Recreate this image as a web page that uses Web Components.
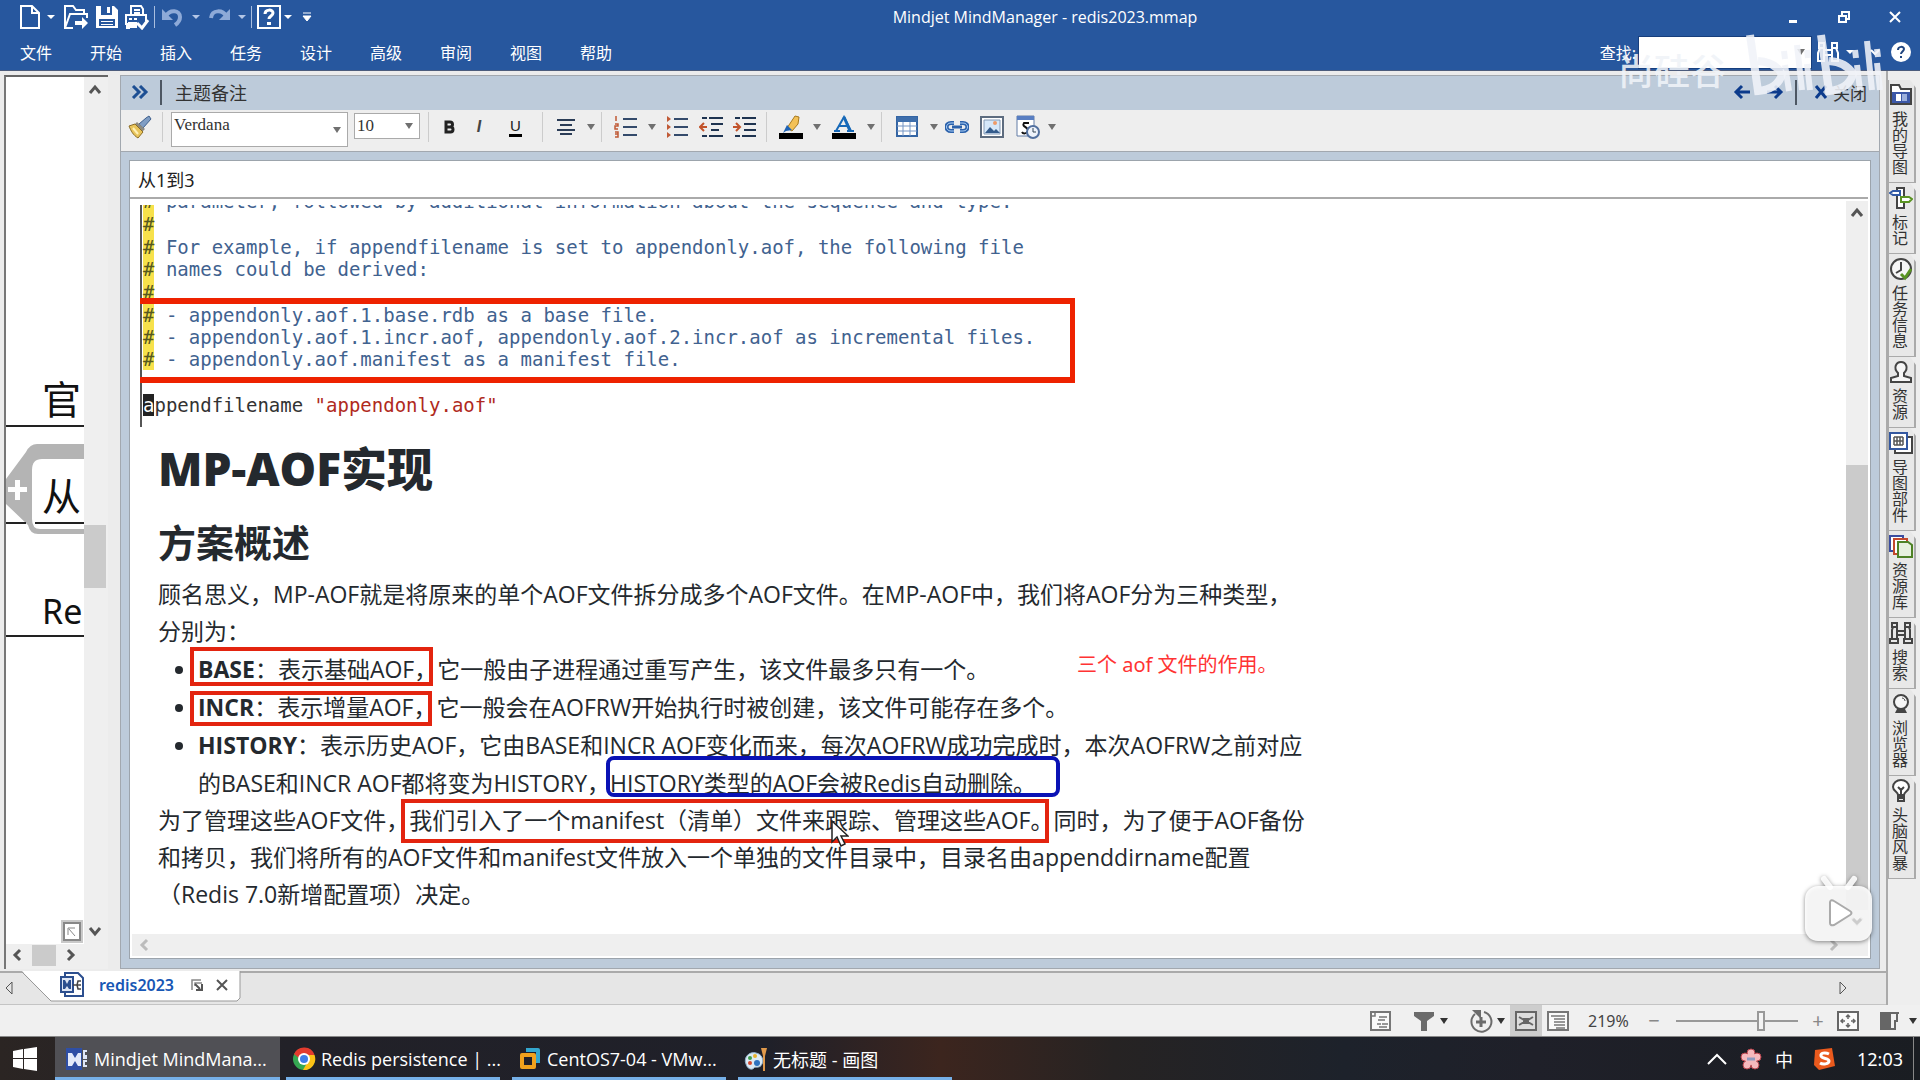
<!DOCTYPE html>
<html lang="zh-CN">
<head>
<meta charset="utf-8">
<title>Mindjet MindManager - redis2023.mmap</title>
<style>
html,body{margin:0;height:100%}
body{font-family:"Noto Sans","Noto Sans CJK SC",sans-serif;font-size:16px;color:#222;overflow:hidden;background:#e6e6e6}
</style>
</head>
<body>
<mind-app></mind-app>
<script>
const BASE_CSS = `*{box-sizing:border-box}button,input,select{font:inherit;color:inherit;margin:0;padding:0;border:0;background:none}button{display:inline-flex;align-items:center;justify-content:center}`;
function define(name, css, html){
  const t = document.createElement('template');
  t.innerHTML = '<style>' + BASE_CSS + css + '</style>' + html;
  customElements.define(name, class extends HTMLElement{
    constructor(){ super(); this.attachShadow({mode:'open'}).appendChild(t.content.cloneNode(true)); }
  });
}

/* name: [width, height, drawing] */
const ICONS = {
  file:[22,26,'<path d="M2 2h11l7 7v15H2z M13 2v7h7" fill="none" stroke="#fff" stroke-width="2"/>'],
  open:[26,26,'<path d="M10 24H2V2h8l3 4h8v4M2 24L7 10h17v4" fill="none" stroke="#fff" stroke-width="2"/><path d="M12 17h7v-4l6 6-6 6v-4h-7z" fill="#fff"/>'],
  save:[24,24,'<path d="M1 1h18l4 4v18H1z" fill="#fff"/><path d="M6 1h11v9H6z M4 14h16v7H4z" fill="#27579e"/><path d="M12 2h3v6h-3z M6 16h12v1H6z M6 19h12v1H6z" fill="#fff"/>'],
  print:[26,26,'<path d="M7 10V2h10l2 3v5M2 21V11h20v6M6 24H3v-5M10 6h6M10 9h6" fill="none" stroke="#fff" stroke-width="2"/><path d="M5 14h3v2H5z M10 14h3v2h-3z M4 18h9v6H4z" fill="#fff"/><path d="M13 19l5 5 6-8" fill="none" stroke="#fff" stroke-width="3"/>'],
  undo:[24,24,'<path d="M2 4v11h11z" fill="#8eaad8"/><path d="M6 11C10 4 20 5 20 12c0 4-2 6-5 8" fill="none" stroke="#8eaad8" stroke-width="4"/>'],
  redo:[24,24,'<path d="M22 4v11H11z" fill="#8eaad8"/><path d="M18 11C15 5 4 4 3 13" fill="none" stroke="#8eaad8" stroke-width="4"/>'],
  helpbox:[24,26,'<path d="M1 2h22v22H1z" fill="none" stroke="#fff" stroke-width="2"/><path d="M8 10c0-5 8-5 8-1 0 3-4 3-4 6" fill="none" stroke="#fff" stroke-width="3"/><path d="M10 18h4v3h-4z" fill="#fff"/>'],
  caretw:[10,6,'<path d="M1 1h8L5 5z" fill="#fff"/>'],
  caretdim:[10,6,'<path d="M1 1h8L5 5z" fill="#b3c6e6"/>'],
  caret:[10,6,'<path d="M1 0h8L5 6z" fill="#707070"/>'],
  caretk:[10,6,'<path d="M1 0h8L5 6z" fill="#333"/>'],
  custom:[10,12,'<path d="M1 2h8M1 5h8L5 10z" fill="#fff" stroke="#fff"/>'],
  min:[12,12,'<path d="M2 9h8v3H2z" fill="#fff"/>'],
  restore:[14,14,'<path d="M2 6h7v6H2zM5 5V2h7v7H9" fill="none" stroke="#fff" stroke-width="2"/>'],
  closew:[14,14,'<path d="M2 2l10 10M12 2L2 12" stroke="#fff" stroke-width="2"/>'],
  bino:[24,22,'<path d="M3 2h5v5H3zM16 2h5v5h-5zM2 20v-8l2-5h4v13zM22 20v-8l-2-5h-4v13zM8 9h8M8 14h8" fill="none" stroke="#fff" stroke-width="2"/>'],
  binok:[24,24,'<path d="M3 2h5v4H3zM16 2h5v4h-5zM3 18V9l1-3h4v12zM21 18V9l-1-3h-4v12zM1 18h8v4H1zM15 18h8v4h-8zM8 10h8M8 14h8" fill="none" stroke="#444" stroke-width="2"/>'],
  chevdw:[12,8,'<path d="M2 2l4 4 4-4" fill="none" stroke="#fff" stroke-width="2"/>'],
  help:[22,22,'<circle cx="11" cy="11" r="10" fill="#fff"/><path d="M8 9c0-4 6-4 6-1 0 2-3 3-3 5" fill="none" stroke="#20457f" stroke-width="2"/><path d="M10 15h2v2h-2z" fill="#20457f"/>'],
  dbl:[18,14,'<path d="M2 1l6 6-6 6M9 1l6 6-6 6" fill="none" stroke="#1d4f93" stroke-width="3"/>'],
  left:[18,16,'<path d="M17 8H3M9 2L3 8l6 6" fill="none" stroke="#0c3b8c" stroke-width="3"/>'],
  right:[18,16,'<path d="M1 8h14M9 2l6 6-6 6" fill="none" stroke="#0c3b8c" stroke-width="3"/>'],
  cross:[14,14,'<path d="M2 1l10 12M12 1L2 13" stroke="#0c3b8c" stroke-width="3"/>'],
  brush:[24,24,'<path d="M21 1l2 3-8 9-4-4 7-6z" fill="#7f9dc4" stroke="#3e5f8d"/><path d="M9 7l8 7-4 4-7-8z" fill="#8d8a80"/><path d="M7 9l8 8-5 6C5 20 3 16 1 11z" fill="#e9c55b" stroke="#8b6c25"/><path d="M5 13l5 6" stroke="#fff0b5" stroke-width="2"/>'],
  bold:[14,14,'<path d="M4 2v10h4.500a2.500 2.500 0 0 0 0-5H4h4a2.500 2.500 0 0 0 0-5z" fill="none" stroke="#222" stroke-width="3"/>'],
  align:[20,18,'<path d="M1 2h18M4 7h12M1 12h18M4 16h12" stroke="#2b3d57" stroke-width="2"/>'],
  num:[26,24,'<path d="M10 4h14M10 12h14M10 20h14" stroke="#344a6b" stroke-width="2"/><path d="M3 1v5M2 9h3v2H2v3h3M2 17h3v5H2M2 19h3" stroke="#c05a36" fill="none" stroke-width="1.500"/>'],
  bul:[24,24,'<path d="M9 4h14M9 12h14M9 20h14" stroke="#344a6b" stroke-width="2"/><path d="M2 1l4 3-4 3zM2 9l4 3-4 3zM2 17l4 3-4 3z" fill="#c05a36"/>'],
  outd:[26,22,'<path d="M3 2h5M10 2h14M12 8h12M12 14h8M3 20h5M10 20h14" stroke="#1e3350" stroke-width="2"/><path d="M8 11H2M5 7l-4 4 4 4" stroke="#c2532b" fill="none" stroke-width="2"/>'],
  ind:[26,22,'<path d="M3 2h5M10 2h14M12 8h12M12 14h12M3 20h5M10 20h14" stroke="#1e3350" stroke-width="2"/><path d="M1 11h6M4 7l4 4-4 4" stroke="#c2532b" fill="none" stroke-width="2"/>'],
  hili:[24,24,'<path d="M0 18h24v6H0z" fill="#000"/><path d="M16 1l4 1-1 7-6 7-5-3z" fill="#f3c157" stroke="#a7791e"/><path d="M8 10l5 5-6 1-3 2z" fill="#1e62b4"/>'],
  fontc:[24,24,'<path d="M0 18h24v6H0z" fill="#000"/><path d="M4 16L12 2l7 14M7 11h9M2 16h6M15 16h7" fill="none" stroke="#1769b8" stroke-width="2"/><path d="M12 2l6 14" stroke="#1769b8" stroke-width="3"/>'],
  table:[22,22,'<path d="M1 1h20v19H1z" fill="#fff" stroke="#3465a4" stroke-width="2"/><path d="M1 1h20v5H1z" fill="#3f6fac"/><path d="M1 10h20M1 15h20M7 6v14M14 6v14" stroke="#7495c4"/>'],
  link:[24,14,'<path d="M9 3H6C0 3 0 11 6 11h3M15 3h3c6 0 6 8 0 8h-3" fill="none" stroke="#2c62ab" stroke-width="4"/><path d="M9 3H6C0 3 0 11 6 11h3M15 3h3c6 0 6 8 0 8h-3" fill="none" stroke="#a9cdf5"/><path d="M7 7h10" stroke="#2c62ab" stroke-width="3"/>'],
  image:[24,22,'<path d="M1 1h22v20H1z" fill="#fff" stroke="#5d6c7f" stroke-width="2"/><path d="M4 4h16v14H4z" fill="#d5e8fa" stroke="#8499b4"/><path d="M5 17l5-6 4 4 2-2 4 4z" fill="#345c8c"/><circle cx="15" cy="7" r="2" fill="#ee9b69"/>'],
  date:[24,24,'<path d="M1 1h17v20H1z" fill="#fff" stroke="#637da6"/><path d="M1 1h17v4H1z" fill="#587ec2"/><path d="M13 8H8c-3 4 5 4 4 8-1 3-5 3-6 1" fill="none" stroke="#111" stroke-width="2"/><circle cx="17" cy="17" r="6" fill="#eef3fb" stroke="#52709f" stroke-width="2"/><path d="M17 13v4h3" stroke="#345" fill="none"/>'],
  chevu:[16,12,'<path d="M3 10l5-6 5 6" fill="none" stroke="#555" stroke-width="3"/>'],
  chevd:[16,12,'<path d="M3 2l5 6 5-6" fill="none" stroke="#555" stroke-width="3"/>'],
  chevl:[12,16,'<path d="M9 3L4 8l5 5" fill="none" stroke="#555" stroke-width="3"/>'],
  chevr:[12,16,'<path d="M3 3l5 5-5 5" fill="none" stroke="#555" stroke-width="3"/>'],
  chevlg:[12,16,'<path d="M9 3L4 8l5 5" fill="none" stroke="#bcbcbc" stroke-width="3"/>'],
  chevrg:[12,16,'<path d="M3 3l5 5-5 5" fill="none" stroke="#bcbcbc" stroke-width="3"/>'],
  corner:[22,23,'<path d="M0 0h22v23H0z" fill="#c9c9c9"/><path d="M3 3h16v17H3z" fill="#fff" stroke="#888" stroke-width="2"/><path d="M7 15V8h7M8 9l6 7" fill="none" stroke="#888"/>'],
  tril:[10,16,'<path d="M8 2v12L2 8z" fill="none" stroke="#555"/>'],
  trir:[10,16,'<path d="M2 2v12l6-6z" fill="none" stroke="#555"/>'],
  doc:[26,26,'<path d="M5 1h13l5 5v18H5z" fill="#fff" stroke="#2c4f8f" stroke-width="2"/><path d="M1 5h12v15H1z" fill="#dfe7f5" stroke="#2c4f8f" stroke-width="2"/><path d="M3 8h2l2 4 2-4h2v9H9l-2-3-2 3H3z" fill="#2c4f8f"/><path d="M13 13h4M21 9h-3l-1 4 1 4h3M17 13h4" fill="none" stroke="#444" stroke-width="1.500"/>'],
  pop:[14,14,'<path d="M2 12V2h9M5 8V5h7" fill="none" stroke="#888" stroke-width="1.500"/><path d="M5 6l5 5M12 6v6H6" fill="none" stroke="#555" stroke-width="2"/>'],
  closek:[14,14,'<path d="M2 2l10 10M12 2L2 12" stroke="#555" stroke-width="2"/>'],
  folder:[24,24,'<path d="M2 21V2h8l2 4h10v15z" fill="#fff" stroke="#444" stroke-width="2"/><path d="M3 9h18v11H3z" fill="#3b57a7"/><path d="M7 11h5v7H7z" fill="#fff"/><path d="M13 11h5v7h-5z" fill="#9db0dc"/>'],
  mark:[24,24,'<path d="M8 2h7v20H8z" fill="#fff" stroke="#444" stroke-width="2"/><path d="M11 5v4H4L1 7l3-2z" fill="#fff" stroke="#3059a6" stroke-width="2"/><path d="M12 11h8l3 2-3 3h-8z" fill="#fff" stroke="#5a9423" stroke-width="2"/>'],
  clock:[24,24,'<circle cx="12" cy="12" r="10" fill="#f6f6f6" stroke="#444" stroke-width="2"/><path d="M12 5v8l-5 3" fill="none" stroke="#444" stroke-width="2"/><path d="M12 17l4 4 6-9" fill="none" stroke="#5a9423" stroke-width="3"/>'],
  person:[24,24,'<path d="M9 13C4 8 7 2 12 2s8 6 3 11v3l7 2v4H2v-4l7-2z" fill="#f6f6f6" stroke="#444" stroke-width="2"/>'],
  parts:[24,24,'<path d="M6 6h17v16H6z" fill="#fff" stroke="#444" stroke-width="2"/><path d="M1 2h17v16H1z" fill="#fff" stroke="#3458a0" stroke-width="2"/><path d="M5 6h9M5 10h9M5 14h9M5 6v8M8 6v8M11 6v8M14 6v8" stroke="#555" stroke-width="1.500"/>'],
  lib:[24,24,'<path d="M1 2h13v15H1z" fill="#fff" stroke="#3b4da0" stroke-width="2"/><path d="M5 5h13v15H5z" fill="#fff" stroke="#c3492d" stroke-width="2"/><path d="M9 8h10l4 3v12H9z" fill="#e7f1df" stroke="#4e8226" stroke-width="2"/>'],
  ball:[24,24,'<circle cx="12" cy="10" r="7" fill="#f6f6f6" stroke="#444" stroke-width="2"/><path d="M13 6c2 0 3 2 3 3" fill="none" stroke="#444"/><path d="M8 17h8l2 4H6z" fill="#444"/>'],
  bulb:[24,24,'<path d="M9 16C9 13 4 12 4 8a8 7 0 0 1 16 0c0 4-5 5-5 8z" fill="#fff" stroke="#444" stroke-width="2"/><path d="M9 8l3 3 3-3M12 11v5M9 17h6v5H9zM9 19h6" fill="none" stroke="#444" stroke-width="2"/>'],
  note:[22,22,'<path d="M1 2h19v18H1z" fill="#fafafa" stroke="#777" stroke-width="2"/><path d="M1 6h4V2M9 7h8M8 10h7M7 14h4M12 14h6M9 17h8" stroke="#777" stroke-width="1.500" fill="none"/>'],
  funnel:[22,22,'<path d="M1 2h20v4l-7 5v10H8V11L1 6z" fill="#6b6b6b"/>'],
  addc:[24,24,'<path d="M15 3a10 10 0 1 1-9 2" fill="none" stroke="#6b6b6b" stroke-width="2"/><path d="M3 1h9v9z" fill="#6b6b6b"/><path d="M12 8v10M7 13h10" stroke="#6b6b6b" stroke-width="3" fill="none"/>'],
  mapv:[22,20,'<path d="M1 1h20v18H1z" fill="#ddd" stroke="#666" stroke-width="2"/><path d="M9 8h4v4H9zM4 6l5 3M4 14l5-3M18 6l-5 3M18 14l-5-3" stroke="#666" stroke-width="2" fill="#666"/>'],
  outline:[22,20,'<path d="M1 1h20v18H1z" fill="#fafafa" stroke="#777" stroke-width="2"/><path d="M4 5h14M7 8h11M7 11h11M7 14h11M9 17h9" stroke="#777" stroke-width="1.500"/>'],
  fit:[22,20,'<path d="M1 1h20v18H1z" fill="#fafafa" stroke="#666" stroke-width="2"/><path d="M11 4v4M11 12v4M4 10h4M14 10h4M9 6l2-2 2 2M9 14l2 2 2-2M6 8l-2 2 2 2M16 8l2 2-2 2" stroke="#666" stroke-width="1.500" fill="none"/>'],
  pane:[22,20,'<path d="M1 1h11v18H1z" fill="#666"/><path d="M12 2h8M18 2v8h-2v8h-4" fill="none" stroke="#666" stroke-width="2"/>'],
  win:[24,24,'<path d="M0 4l10-2v9H0zM11 2l13-2v11H11zM0 12h10v10L0 20zM11 12h13v12l-13-2z" fill="#fff"/>'],
  mind:[24,24,'<path d="M1 1h16v22H1z" fill="#2f4fa5"/><path d="M3 6h4l3 5 3-5h3v13h-3l-3-5-3 5H3z" fill="#e3eafa"/><path d="M22 4h-3v5h3M22 11h-4M22 14h-3v5h3" fill="none" stroke="#dfe7f8" stroke-width="2"/>'],
  chrome:[24,24,'<circle cx="12" cy="12" r="11" fill="#35a852"/><path d="M12 12h-4L2 7a11 11 0 0 1 20.500 1H12z" fill="#e33b2e"/><path d="M12 8h10.500A11 11 0 0 1 11 23l5-9z" fill="#fbc116"/><circle cx="12" cy="12" r="6" fill="#fff"/><circle cx="12" cy="12" r="4" fill="#3f7de8"/>'],
  vm:[24,24,'<path d="M8 3h12v13" fill="none" stroke="#34a7cf" stroke-width="4" stroke-linejoin="round"/><path d="M4 8h12v12H4z" fill="none" stroke="#f0a21d" stroke-width="4" stroke-linejoin="round"/>'],
  paint:[24,26,'<path d="M2 18C-1 11 6 5 12 7c6 1 8 7 6 11-2 5-7 2-8 4-3 3-7 0-8-4z" fill="#dceaf5" stroke="#8fb0cb"/><circle cx="6" cy="12" r="2" fill="#3f9c4c"/><circle cx="11" cy="10" r="2" fill="#e8b12d"/><circle cx="6" cy="17" r="2" fill="#d4472f"/><circle cx="13" cy="17" r="3" fill="#2e72bf"/><path d="M19 25V10l-2-8h6l-2 8v15z" fill="#e19a4b"/>'],
  up:[22,14,'<path d="M2 12l9-9 9 9" fill="none" stroke="#fff" stroke-width="2"/>'],
  flower:[24,24,'<g fill="#f5b9bd" stroke="#b8434c"><circle cx="12" cy="6" r="4"/><circle cx="18" cy="10" r="4"/><circle cx="16" cy="18" r="4"/><circle cx="8" cy="18" r="4"/><circle cx="6" cy="10" r="4"/></g><circle cx="12" cy="12" r="6" fill="#f5b9bd"/><path d="M8 12h8" stroke="#8d9bc0" stroke-width="3"/>'],
  sogou:[24,24,'<path d="M3 3l17-2 3 18-16 4-5-5z" fill="#ea5a1d"/><path d="M17 7c-4-2-9-1-8 2s8 2 8 5-6 4-9 2" fill="none" stroke="#fff" stroke-width="3"/>']
};
customElements.define('ui-icon', class extends HTMLElement{
  constructor(){ super(); this.attachShadow({mode:'open'}); }
  connectedCallback(){
    const [w,h,d] = ICONS[this.getAttribute('name')];
    this.shadowRoot.innerHTML = '<style>:host{display:inline-flex;flex:none}svg{display:block}</style><svg width="'+w+'" height="'+h+'" viewBox="0 0 '+w+' '+h+'" aria-hidden="true">'+d+'</svg>';
  }
});
const ic = n => '<ui-icon name="'+n+'"></ui-icon>';
const btn = (n,w,label) => '<button type="button" aria-label="'+(label||n)+'" style="width:'+w+'px">'+ic(n)+'</button>';
const sep = '<i class="sep"></i>';

define('title-bar', `
:host{display:flex;height:34px;align-items:center;color:#fff;padding-left:18px}
.quick{display:flex;align-items:center;height:30px}
.sep{width:1px;height:22px;background:#a9bedf;margin:0 2px}
h1{margin:0 auto;font-family:"Open Sans","Noto Sans",sans-serif;font-size:16px;font-weight:400;line-height:24px;white-space:nowrap}
.win{display:flex}
.win button{height:30px}
`, `<div class="quick">${btn('file',24,'新建')}${btn('caretw',18)}${btn('open',32,'打开')}${btn('save',30,'保存')}${btn('print',30,'打印')}${sep}${btn('undo',30,'撤消')}${btn('caretdim',18)}${btn('redo',30,'恢复')}${btn('caretdim',14)}${sep}${btn('helpbox',30,'帮助')}${btn('caretw',8)}${btn('custom',30)}</div>
<h1>Mindjet MindManager - redis2023.mmap</h1>
<div class="win">${btn('min',50,'最小化')}${btn('restore',52,'还原')}${btn('closew',50,'关闭')}</div>`);

define('menu-item', `:host{display:block;width:70px}button{width:70px;height:32px;font-size:16px;justify-content:flex-start;color:#fff}`, `<button type="button"><slot></slot></button>`);

define('menu-bar', `
:host{display:flex;height:36px;align-items:center;padding:0 12px 0 20px;color:#fff}
nav{display:flex;flex:1}
label{font-size:16px;margin-right:2px}
.find{display:flex;align-items:center;background:#fff;border:1px solid #173e7c;width:174px;height:33px}
.find input{flex:1;min-width:0;height:100%;outline:0;color:#222}
`, `<nav>${['文件','开始','插入','任务','设计','高级','审阅','视图','帮助'].map(t=>'<menu-item>'+t+'</menu-item>').join('')}</nav>
<label for="q">查找:</label><div class="find"><input id="q" type="text">${btn('caret',20)}</div>${btn('bino',32,'查找')}${btn('caretw',12)}${btn('chevdw',38)}${btn('help',14,'帮助')}`);

define('map-canvas', `
:host{display:flex;width:104px;margin:4px 0 2px 4px;border-left:2px solid #777;border-top:2px solid #666;background:#efefef}
.col{width:78px;display:flex;flex-direction:column}
.map{position:relative;flex:1;background:#fff;overflow:hidden}
.map svg{position:absolute;left:0;top:0}
.map span{position:absolute;left:36px;line-height:48px;color:#111}
.z{font-size:39px}.r{font-size:34px}
.corner{position:absolute;right:1px;bottom:1px}
.h{display:flex;height:22px;align-items:center;margin-bottom:3px}
.h i{width:24px;height:21px;background:#cbcbcb;margin:0 9px}
.v{width:22px;display:flex;flex-direction:column;align-items:center;padding:6px 0 31px}
.v i{width:22px;height:63px;background:#cbcbcb;margin-top:430px}
.v ui-icon:last-child{margin-top:auto}
.h ui-icon:first-child{margin-left:5px}
`, `<div class="col"><div class="map">
<svg width="78" height="846" viewBox="0 0 78 846"><path d="M78 367H31Q24 367 20 375L0 402V427L22 448Q24 457 32 457H78V452H34Q26 452 26 442V393Q26 382 36 382H78z" fill="#b4b4b4"/><path d="M0 349h78M0 446h20M29 446h49M0 559h78" stroke="#222" stroke-width="2"/><path d="M9 403h5v7h7v5h-7v8H9v-8H2v-5h7z" fill="#fff"/></svg>
<span class="z" style="top:298px">官</span><span class="z" style="top:395px">从</span><span class="r" style="top:510px">Re</span>
<ui-icon class="corner" name="corner"></ui-icon></div>
<div class="h">${ic('chevl')}<i></i>${ic('chevr')}</div></div>
<div class="v">${ic('chevu')}<i></i>${ic('chevd')}</div>`);

define('format-toolbar', `
:host{display:flex;height:42px;background:#eee;border-bottom:1px solid #a2a8af;padding:1px 0 0}
.row{display:flex;align-items:center;height:32px}
.sep{width:1px;height:30px;background:#ccc;margin:0 4px}
.row button{height:30px}
.sel{position:relative;display:flex;background:#fff;border:1px solid #aaa;margin-left:4px;align-items:center;align-self:flex-start}
.sel select{appearance:none;width:100%;font-family:"Liberation Serif",serif;font-size:17px;line-height:20px;padding-left:2px;outline:0;color:#333}
.sel ui-icon{position:absolute;right:5px;pointer-events:none}
.f{width:177px;height:35px;padding-bottom:9px;margin-top:1px}.f ui-icon{top:14px}
.s{width:66px;height:26px;margin:2px 4px 0 6px}
.i{font:italic 700 16px "Liberation Sans",sans-serif;color:#444}.u{font:700 15px "Liberation Sans",sans-serif}.u b{font-weight:400;border-bottom:3px solid #000;line-height:16px;padding:0 1px}
`, `<div class="row">${btn('brush',37,'格式刷')}${sep}
<div class="sel f"><select aria-label="字体"><option>Verdana</option></select>${ic('caret')}</div>
<div class="sel s"><select aria-label="字号"><option>10</option></select>${ic('caret')}</div>
${sep}${btn('bold',32,'加粗')}<button type="button" class="i" style="width:28px">I</button><button type="button" class="u" style="width:45px"><b>U</b></button>${sep}${btn('align',38,'对齐')}${btn('caret',12)}${sep}${btn('num',40)}${btn('caret',12)}${btn('bul',38)}${btn('outd',32)}${btn('ind',34)}${sep}${btn('hili',40)}${btn('caret',12)}${btn('fontc',42)}${btn('caret',12)}${sep}${btn('table',42)}${btn('caret',12)}${btn('link',34)}${btn('image',36)}${btn('date',36)}${btn('caret',12)}</div>`);

define('marked-text', `
:host{display:inline-block;position:relative}
:host::after{content:"";position:absolute;inset:var(--inset,0 4px 1px -8px);border:4px solid #e3240f;pointer-events:none}
:host([kind=blue])::after{border-color:#0a12b5;border-radius:8px}
`, `<slot></slot>`);

define('code-shot', `
:host{display:block;margin:-15px 0 0 10px;border-left:2px solid #555;height:237px;position:relative;font-family:"DejaVu Sans Mono",monospace;font-size:19px;color:#41628f;white-space:pre}
div{line-height:22px;height:22px;padding-left:1px}
.e{height:24px;line-height:24px}
i{font-style:normal;background:#f7e14b;color:#555820;display:inline-block;height:100%}
.cmd{color:#333}.cmd b{font-weight:400;background:#222;color:#fff}.cmd em{font-style:normal;color:#b02a20}
.box{position:absolute;left:-2px;top:108px;width:935px;height:85px;padding:0;border:solid #ee2200;border-width:6px 5px 6px 0}
`, `<div><i>#</i> parameter, followed by additional information about the sequence and type.</div><div class="e"><i>#</i></div><div><i>#</i> For example, if appendfilename is set to appendonly.aof, the following file</div><div><i>#</i> names could be derived:</div><div class="e"><i>#</i></div><div><i>#</i> - appendonly.aof.1.base.rdb as a base file.</div><div><i>#</i> - appendonly.aof.1.incr.aof, appendonly.aof.2.incr.aof as incremental files.</div><div><i>#</i> - appendonly.aof.manifest as a manifest file.</div><div class="e"></div><div class="cmd"><b>a</b>ppendfilename <em>"appendonly.aof"</em></div><div class="box"></div>`);

define('notes-article', `
:host{display:block;position:relative;flex:1;min-width:0;overflow:hidden;margin-top:6px;white-space:nowrap;color:#24292e}
article{padding-left:28px;font-family:"Open Sans","Noto Sans CJK SC",sans-serif;font-size:23px}
h2,h3,p,ul{margin:0}
h2{font-size:46px;line-height:60px;margin-top:11px;font-weight:800}
h3{font-size:38px;line-height:56px;margin:16px 0 6px;font-weight:700}
p{line-height:37px}
ul{padding-left:40px}li{line-height:38px}li::marker{font-size:22px}
aside{position:absolute;left:947px;top:448px;font-size:20px;line-height:24px;color:#f33}
.cur{position:absolute;left:701px;top:615px}
`, `<code-shot></code-shot><article><h2>MP-AOF实现</h2><h3>方案概述</h3>
<p>顾名思义，MP-AOF就是将原来的单个AOF文件拆分成多个AOF文件。在MP-AOF中，我们将AOF分为三种类型，<br>分别为：</p>
<ul><li><marked-text style="--inset:-3px 4px 2px -8px"><b>BASE</b>：表示基础AOF，</marked-text>它一般由子进程通过重写产生，该文件最多只有一个。</li>
<li><marked-text style="--inset:3px 4px 0 -8px"><b>INCR</b>：表示增量AOF，</marked-text>它一般会在AOFRW开始执行时被创建，该文件可能存在多个。</li>
<li><b>HISTORY</b>：表示历史AOF，它由BASE和INCR AOF变化而来，每次AOFRW成功完成时，本次AOFRW之前对应<br>的BASE和INCR AOF都将变为HISTORY，<marked-text kind="blue" style="--inset:-8px -24px 5px -4px">HISTORY类型的AOF会被Redis自动删除。</marked-text></li></ul>
<p>为了管理这些AOF文件，<marked-text style="--inset:-3px 4px -4px -8px">我们引入了一个manifest（清单）文件来跟踪、管理这些AOF。</marked-text>同时，为了便于AOF备份<br>和拷贝，我们将所有的AOF文件和manifest文件放入一个单独的文件目录中，目录名由appenddirname配置<br>（Redis 7.0新增配置项）决定。</p></article>
<aside>三个 aof 文件的作用。</aside>
<svg class="cur" width="18" height="28" viewBox="0 0 18 28"><path d="M1 1v21l5-5 4 9 4-2-4-8h7z" fill="#fff" stroke="#222" stroke-width="1.500"/></svg>`);

define('notes-panel', `
:host{display:flex;flex-direction:column;flex:1;min-width:0;margin:4px 6px 2px 12px;border:1px solid #a2a8af;background:#bdcbda}
header{display:flex;align-items:center;height:34px;padding:0 12px 2px 9px;font-size:18px;color:#333}
header .sep{width:2px;height:25px;background:#4d5763}
.t{flex:1;padding-left:13px}
header button{font-size:17px}
.body{flex:1;min-height:0;margin:8px;margin-bottom:9px;border:1px solid #9ca4ac;background:#fff;display:flex;flex-direction:column}
.name{height:38px;border-bottom:2px solid #aaa;font-size:18px;line-height:38px;padding-left:8px;margin-right:2px}
.mid{flex:1;display:flex;min-height:0}
.v{width:22px;margin:2px 2px 0 0;background:#efefef;display:flex;flex-direction:column;align-items:center;padding:5px 0 6px}
.v i{flex:1;width:22px;background:#cbcbcb;margin:247px 0 6px}
.h{height:22px;background:#efefef;display:flex;align-items:center;justify-content:space-between;padding:0 28px 0 6px;margin:0 2px 2px}
`, `<header>${btn('dbl',20,'折叠')}<i class="sep" style="margin-left:10px"></i><span class="t">主题备注</span>${btn('left',34)}${btn('right',32)}<i class="sep" style="margin:0 12px 0 4px"></i>${btn('cross',24)}<button type="button">关闭</button></header>
<format-toolbar></format-toolbar>
<div class="body"><div class="name">从1到3</div><div class="mid"><notes-article></notes-article><div class="v">${ic('chevu')}<i></i>${ic('chevd')}</div></div><div class="h">${ic('chevlg')}${ic('chevrg')}</div></div>`);

define('doc-tabs', `
:host{display:flex;height:34px;align-items:flex-start;background:#e6e6e6;border-top:2px solid #aaa;border-bottom:1px solid #c4c4c4;padding:0 38px 0 4px;justify-content:space-between}
.l{display:flex}
.l>ui-icon,.r{margin-top:7px}
.tab{position:relative;width:219px;height:29px;margin-left:8px;display:flex;align-items:center;padding:0 2px 6px 38px}
.tab>*{position:relative}.tab>svg{position:absolute;left:0;top:-2px}
a{color:#1757b5;text-decoration:none;font-size:16px;font-weight:600;margin:0 16px 0 13px}
`, `<div class="l">${ic('tril')}<div class="tab"><svg width="219" height="32" viewBox="0 0 219 32"><path d="M0 0l29 30h186l3-3V0z" fill="#fff"/><path d="M0 1l29 29h186l3-3V0" fill="none" stroke="#999"/></svg>${ic('doc')}<a href="#">redis2023</a>${btn('pop',14)}${btn('closek',42,'关闭')}</div></div><ui-icon class="r" name="trir"></ui-icon>`);

define('side-tab', `
:host{display:block;background:#e8e8e8;border:solid #aaa;border-width:0 2px 1px 1px;clip-path:polygon(0 0,22px 0,100% 8px,100% 100%,0 100%)}
button{display:flex;flex-direction:column;align-items:flex-start;width:100%;gap:4px;padding:3px 0 7px;color:#333}
span{writing-mode:vertical-rl;text-orientation:upright;font-size:16px;line-height:20px}
`, `<button type="button"><slot name="icon"></slot><span><slot></slot></span></button>`);

define('side-rail', `:host{display:block;width:34px;border-left:2px solid #aaa;background:#eee;padding:9px 4px 0 0}`,
 [['folder','我的导图'],['mark','标记'],['clock','任务信息'],['person','资源'],['parts','导图部件'],['lib','资源库'],['binok','搜索'],['ball','浏览器'],['bulb','头脑风暴']].map(a=>'<side-tab><ui-icon slot="icon" name="'+a[0]+'"></ui-icon>'+a[1]+'</side-tab>').join(''));

define('status-bar', `
:host{display:flex;height:32px;background:#f0f0f0;border-bottom:1px solid #888;justify-content:flex-end;align-items:center;color:#444}
button{height:31px}.on{background:#cdcdcd}
.gap{width:16px}.gap.s{width:4px}
output{font-size:16px;width:58px;padding-left:14px}
.m{color:#888;font-size:20px;line-height:20px}
input{appearance:none;width:122px;height:24px;background:linear-gradient(#999,#999) center/100% 2px no-repeat}
input::-webkit-slider-thumb{appearance:none;width:8px;height:20px;background:#f4f4f4;border:2px solid #999}
`, `${btn('note',58)}${btn('funnel',28,'筛选')}${btn('caretk',12)}<span class="gap"></span>${btn('addc',30)}${btn('caretk',10)}<span class="gap s"></span><button type="button" class="on" aria-label="导图" style="width:32px">${ic('mapv')}</button>${btn('outline',32)}<output>219%</output><button type="button" class="m" style="width:44px">−</button><input type="range" aria-label="缩放" min="0" max="100" value="71"><button type="button" class="m" style="width:40px">+</button>${btn('fit',20)}<span class="gap"></span>${btn('pane',32)}${btn('caretk',14)}`);

define('task-item', `
:host{display:block;border-bottom:3px solid #76b0e8;height:43px;width:214px}
:host([active]){background:#505055;width:225px}
button{color:#fff;font-family:"Open Sans","Noto Sans CJK SC",sans-serif;font-size:18px;gap:5px;height:40px;padding:4px 0 0 6px;white-space:nowrap}
:host([active]) button{padding-left:10px}
`, `<button type="button"><slot name="icon"></slot><span><slot></slot></span></button>`);

define('task-bar', `
:host{display:flex;height:43px;background:linear-gradient(90deg,#2b2523 0,#222128 15%,#1f2029 40%,#3c251e 49%,#262323 58%,#1d222b 70%,#1f2029 80%,#1a1d22);color:#fff;font-size:18px;align-items:center}
nav{display:flex;gap:12px;flex:1;padding-left:5px}task-item[active]{margin-right:-6px}
.tray{display:flex;align-items:center}
time{margin:0 10px 0 9px}
.edge{width:7px;height:43px;border-left:1px solid #888}
`, `${btn('win',50,'开始')}<nav><task-item active><ui-icon slot="icon" name="mind"></ui-icon>Mindjet MindMana...</task-item><task-item><ui-icon slot="icon" name="chrome"></ui-icon>Redis persistence | ...</task-item><task-item><ui-icon slot="icon" name="vm"></ui-icon>CentOS7-04 - VMw...</task-item><task-item><ui-icon slot="icon" name="paint"></ui-icon>无标题 - 画图</task-item></nav>
<div class="tray">${btn('up',34)}${btn('flower',34)}<button type="button" style="width:32px">中</button>${btn('sogou',48)}<time>12:03</time><i class="edge"></i></div>`);

define('video-mark', `
:host{position:absolute;right:36px;top:33px;display:flex;align-items:center;color:rgba(240,243,248,.88);pointer-events:none}
span{font-size:36px;line-height:40px;padding:14px 16px 0 0;font-weight:500}
svg{display:block}
`, `<span>尚硅谷</span><svg width="142" height="64" viewBox="0 0 142 64" role="img" aria-label="bilibili" fill="none" stroke="currentColor"><path d="M8 2l8 56q20-2 24-17-7-12-24-13" stroke-width="8"/><path d="M43 32l4 26M55 12l5 45M65 31l3 26M42 18l1 8M65 17l1 8" stroke-width="6"/><path d="M79 2l8 56q20-2 24-17-7-12-24-13" stroke-width="8"/><path d="M115 32l3 25M125 8l5 49M135 30l3 27M113 17l1 8M135 16l1 8" stroke-width="6"/></svg>`);

define('play-mark', `:host{position:absolute;right:46px;bottom:137px;pointer-events:none}svg{display:block;filter:drop-shadow(0 1px 2px rgba(0,0,0,.5))}`,
`<svg width="70" height="68" viewBox="0 0 70 68"><path d="M20 4l6 8M50 4l-6 8" stroke="#fff" stroke-width="6" stroke-linecap="round" opacity=".9"/><rect x="1" y="11" width="67" height="55" rx="13" fill="#fff" fill-opacity=".9"/><path d="M26 27q1-3 4-1l16 10q3 2 0 4L30 50q-4 1-4-2z" fill="#fff" stroke="#aaa" stroke-width="2"/><path d="M49 44l4 4 4-4" fill="none" stroke="#ccc" stroke-width="3"/></svg>`);

define('mind-app', `
:host{display:flex;flex-direction:column;height:100vh;position:relative}
.top{background:#27579e;height:71px;border-bottom:1px solid #4c5c7c;flex:none}
.work{flex:1;display:flex;min-height:0}
.main{flex:1;min-width:0;display:flex;flex-direction:column}
.panes{flex:1;display:flex;min-height:0;background:#ececec}
`, `<div class="top"><title-bar></title-bar><menu-bar></menu-bar></div>
<div class="work"><div class="main"><div class="panes"><map-canvas></map-canvas><notes-panel></notes-panel></div><doc-tabs></doc-tabs></div><side-rail></side-rail></div>
<status-bar></status-bar><task-bar></task-bar><video-mark></video-mark><play-mark></play-mark>`);
</script>
</body>
</html>
